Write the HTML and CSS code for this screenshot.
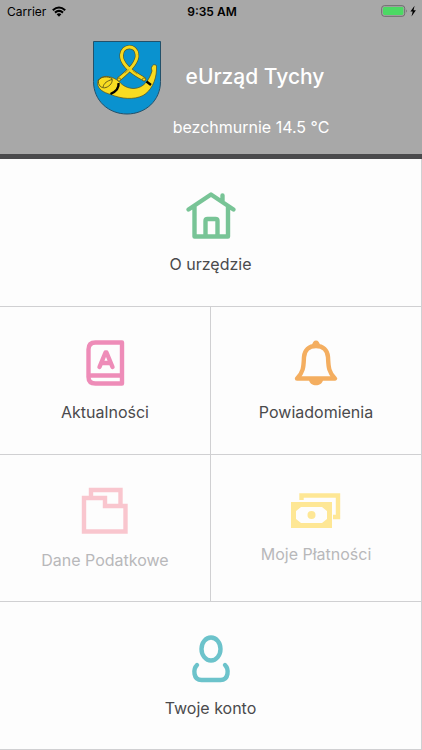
FILE: index.html
```html
<!DOCTYPE html>
<html lang="pl">
  <head>
    <meta charset="UTF-8" />
    <meta name="viewport" content="width=device-width, initial-scale=1.0" />
    <title>eUrząd Tychy</title>
    <link rel="stylesheet" href="styles.css">
  </head>
  <body>
    <header class="header">
      <div class="status">
        <div class="status__left">
          <span>Carrier</span>
          <svg class="status__wifi" viewBox="0 0 14 11" aria-hidden="true">
            <path d="M.8 4.2Q7-1.200 13.200 4.2M3 6.600Q7 3 11 6.600" fill="none" stroke="#000" stroke-width="2.100"/>
            <path d="M4.6 8.200Q7 6.200 9.400 8.200L7 10.700z"/>
          </svg>
        </div>
        <strong class="status__time">9:35 AM</strong>
        <div class="status__right">
          <svg class="status__battery" viewBox="0 0 36 12" aria-hidden="true">
            <rect x=".7" y=".7" width="23" height="10.6" rx="2.6" fill="none" stroke="#6c6c6c"/>
            <rect x="2" y="2" width="20.4" height="8" rx="1.4" fill="#4cd964"/>
            <path d="M25.2 4.2q1.6 1.8 0 3.6z" fill="#6c6c6c"/>
            <path d="M33.6.8l-4.2 5.8h2.3l-1.2 4.8 4.4-6.2h-2.4z"/>
          </svg>
        </div>
      </div>
      <div class="brand">
        <svg class="brand__crest" viewBox="0 0 68 74" role="img" aria-label="Herb Tychów">
          <path d="M.5.5h67v40c0 19-15 32.500-33.500 32.500S.5 59.500.5 40.500z" fill="#0a92cf" stroke="#24516a"/>
          <g fill="none" stroke-linecap="round">
            <path d="M26 38C36 30 45 21 44 13.500C43 3.500 29.500 3.500 28.500 14C28 23 38 31 51 38" stroke="#5a5620" stroke-width="4.200"/>
            <path d="M51 38C38 31 28 23 28.500 14C29.500 3.500 43 3.500 44 13.500C45 21 36 30 26 38" stroke="#f5d91f" stroke-width="3"/>
            <path d="M32 32l3.500-3M40 30l4 3" stroke="#9a8a1c" stroke-width=".8"/>
          </g>
          <path d="M7 37.500C11 33.500 20 35.500 26 40.500C30 45 35 47.500 41 47.500C50 47 56 40 59 30L58.300 27Q60 22 63.500 24.500L63.500 29C63 40 58 50 50 54.500C41 59 28 58 18 53.500C10 51.500 5 48 4.500 42.500Q4.500 39 7 37.500z" fill="#f8dc22" stroke="#574f1a" stroke-width=".7"/>
          <path d="M5.500 39c-1 5 3 9 7.500 7.500c4-1.500 7-5 6-9c-4-2.500-11-2-13.500 1.500zM10 46c1-4 4-6 9-7.500" fill="none" stroke="#574f1a" stroke-width=".9"/>
          <path d="M25.500 42q1 7-8 11M53.500 40.500l4.500 3.500" fill="none" stroke="#000" stroke-width="2.400"/>
          <circle cx="26" cy="38.500" r="1.600" fill="#f5d91f" stroke="#574f1a" stroke-width=".7"/>
          <circle cx="51" cy="38.500" r="1.600" fill="#f5d91f" stroke="#574f1a" stroke-width=".7"/>
        </svg>
        <div class="brand__text">
          <h1 class="brand__title">eUrząd Tychy</h1>
          <p class="brand__weather">bezchmurnie 14.5 °C</p>
        </div>
      </div>
    </header>

    <nav class="menu">
      <a class="tile tile--wide tile--green" href="#urzad">
        <svg class="tile__icon" viewBox="0 0 48 48" aria-hidden="true">
          <path d="M1.500 18.500L24 3.500l22.500 15M7.500 15v30.500h33.500V15M35.500 10V4.500M18.500 44V30q0-2 2-2h8q2 0 2 2V44"/>
        </svg>
        <span class="tile__label">O urzędzie</span>
      </a>
      <a class="tile tile--pink" href="#aktualnosci">
        <svg class="tile__icon" viewBox="0 0 48 48" aria-hidden="true">
          <path d="M41 3.500H14.500q-7 0-7 7V38q0 6.500 7 6.500H41zM7.500 37.500q1-1 3-1H41"/>
          <path d="M18.500 28L24.500 13.500h1L31.500 28M21 24h8"/>
        </svg>
        <span class="tile__label">Aktualności</span>
      </a>
      <a class="tile tile--orange" href="#powiadomienia">
        <svg class="tile__icon" viewBox="0 0 48 48" aria-hidden="true">
          <path d="M5 39.500C12 33 11.500 26 12 18C12.500 11 17 7 24 7s11.500 4 12 11c.5 8 0 15 7 21.500z"/>
          <path class="tile__solid" d="M20 7c0-7.500 8-7.500 8 0zM17 41h14c-1 7-13 7-14 0z"/>
        </svg>
        <span class="tile__label">Powiadomienia</span>
      </a>
      <a class="tile tile--rose tile--disabled" href="#podatki" aria-disabled="true">
        <svg class="tile__icon" viewBox="0 0 48 48" aria-hidden="true">
          <path class="tile__sharp" d="M3 11h21v8h20.500v25.500H3zM10 11V3h29.500v16"/>
        </svg>
        <span class="tile__label">Dane Podatkowe</span>
      </a>
      <a class="tile tile--yellow tile--disabled" href="#platnosci" aria-disabled="true">
        <svg class="tile__icon tile__icon--low" viewBox="0 0 50 36" aria-hidden="true">
          <path class="tile__sharp" d="M10.500 7V2.500H47v21.500h-5"/>
          <path class="tile__solid" fill-rule="evenodd" d="M0 9h41v26H0zM10 14l-5 4v8l5 4h21l5-4v-8l-5-4z"/>
          <circle class="tile__solid" cx="20.500" cy="22" r="4"/>
        </svg>
        <span class="tile__label">Moje Płatności</span>
      </a>
      <a class="tile tile--wide tile--teal" href="#konto">
        <svg class="tile__icon" viewBox="0 0 48 48" aria-hidden="true">
          <ellipse cx="24" cy="14" rx="9.500" ry="11.500"/>
          <path d="M10 30C6 34 6 45 14.500 45h19C42 45 42 34 38 30"/>
        </svg>
        <span class="tile__label">Twoje konto</span>
      </a>
    </nav>
  </body>
</html>
```
FILE: styles.css
```css
:root {
  --header: #a8a8a8;
  --dark: #4a4a4c;
  --line: #d0d0d2;
  --surface: #fdfdfd;
}

* {
  box-sizing: border-box;
}

body {
  margin: 0;
  min-height: 100vh;
  display: flex;
  flex-direction: column;
  font-family: Inter, "Liberation Sans", sans-serif;
  color: var(--dark);
  background: var(--surface);
}

.header {
  background: var(--header);
  border-bottom: 5px solid var(--dark);
  padding-bottom: 16px;
}

.status {
  display: grid;
  grid-template-columns: 1fr auto 1fr;
  align-items: center;
  height: 22px;
  padding: 0 5px 0 7px;
  font-size: 12px;
  color: #000;
}

.status__left {
  display: flex;
  align-items: center;
  gap: 6px;
}

.status__time {
  font-weight: 600;
}

.status__wifi {
  width: 14px;
  height: 11px;
}

.status__right {
  display: flex;
  justify-content: flex-end;
}

.status__battery {
  width: 36px;
  height: 12px;
}

.brand {
  display: flex;
  justify-content: center;
  gap: 12px;
  padding-top: 19px;
  color: #fff;
}

.brand__crest {
  width: 68px;
  height: 74px;
}

.brand__text {
  padding-top: 20px;
  text-align: center;
}

.brand__title {
  margin: 0 0 23px;
  padding-left: 8px;
  font-size: 21px;
  line-height: 32px;
  font-weight: 500;
}

.brand__weather {
  margin: 0;
  font-size: 16px;
  line-height: 22px;
}

.menu {
  flex: 1;
  display: grid;
  grid-template-columns: 1fr 1fr;
  grid-auto-rows: 1fr;
}

.tile {
  display: flex;
  flex-direction: column;
  align-items: center;
  justify-content: center;
  gap: 14px;
  padding-top: 2px;
  border-right: 1px solid var(--line);
  border-bottom: 1px solid var(--line);
  color: inherit;
  text-decoration: none;
}

.tile--wide {
  grid-column: span 2;
}

.tile__icon {
  width: 48px;
  height: 48px;
  overflow: visible;
  fill: none;
  stroke: var(--accent);
  stroke-width: 4.4;
  stroke-linecap: round;
  stroke-linejoin: round;
}

.tile__icon--low {
  width: 50px;
  height: 36px;
}

.tile__solid {
  fill: var(--accent);
  stroke: none;
}

.tile__sharp {
  stroke-linecap: butt;
  stroke-linejoin: miter;
}

.tile__label {
  font-size: 16px;
  line-height: 22px;
}

.tile--disabled {
  color: #b8b8ba;
}

.tile--green {
  --accent: #78c496;
}

.tile--pink {
  --accent: #ee8cb8;
}

.tile--orange {
  --accent: #f4ae60;
}

.tile--rose {
  --accent: #f9c6ce;
}

.tile--yellow {
  --accent: #fee795;
}

.tile--teal {
  --accent: #6cc3cb;
}
```
